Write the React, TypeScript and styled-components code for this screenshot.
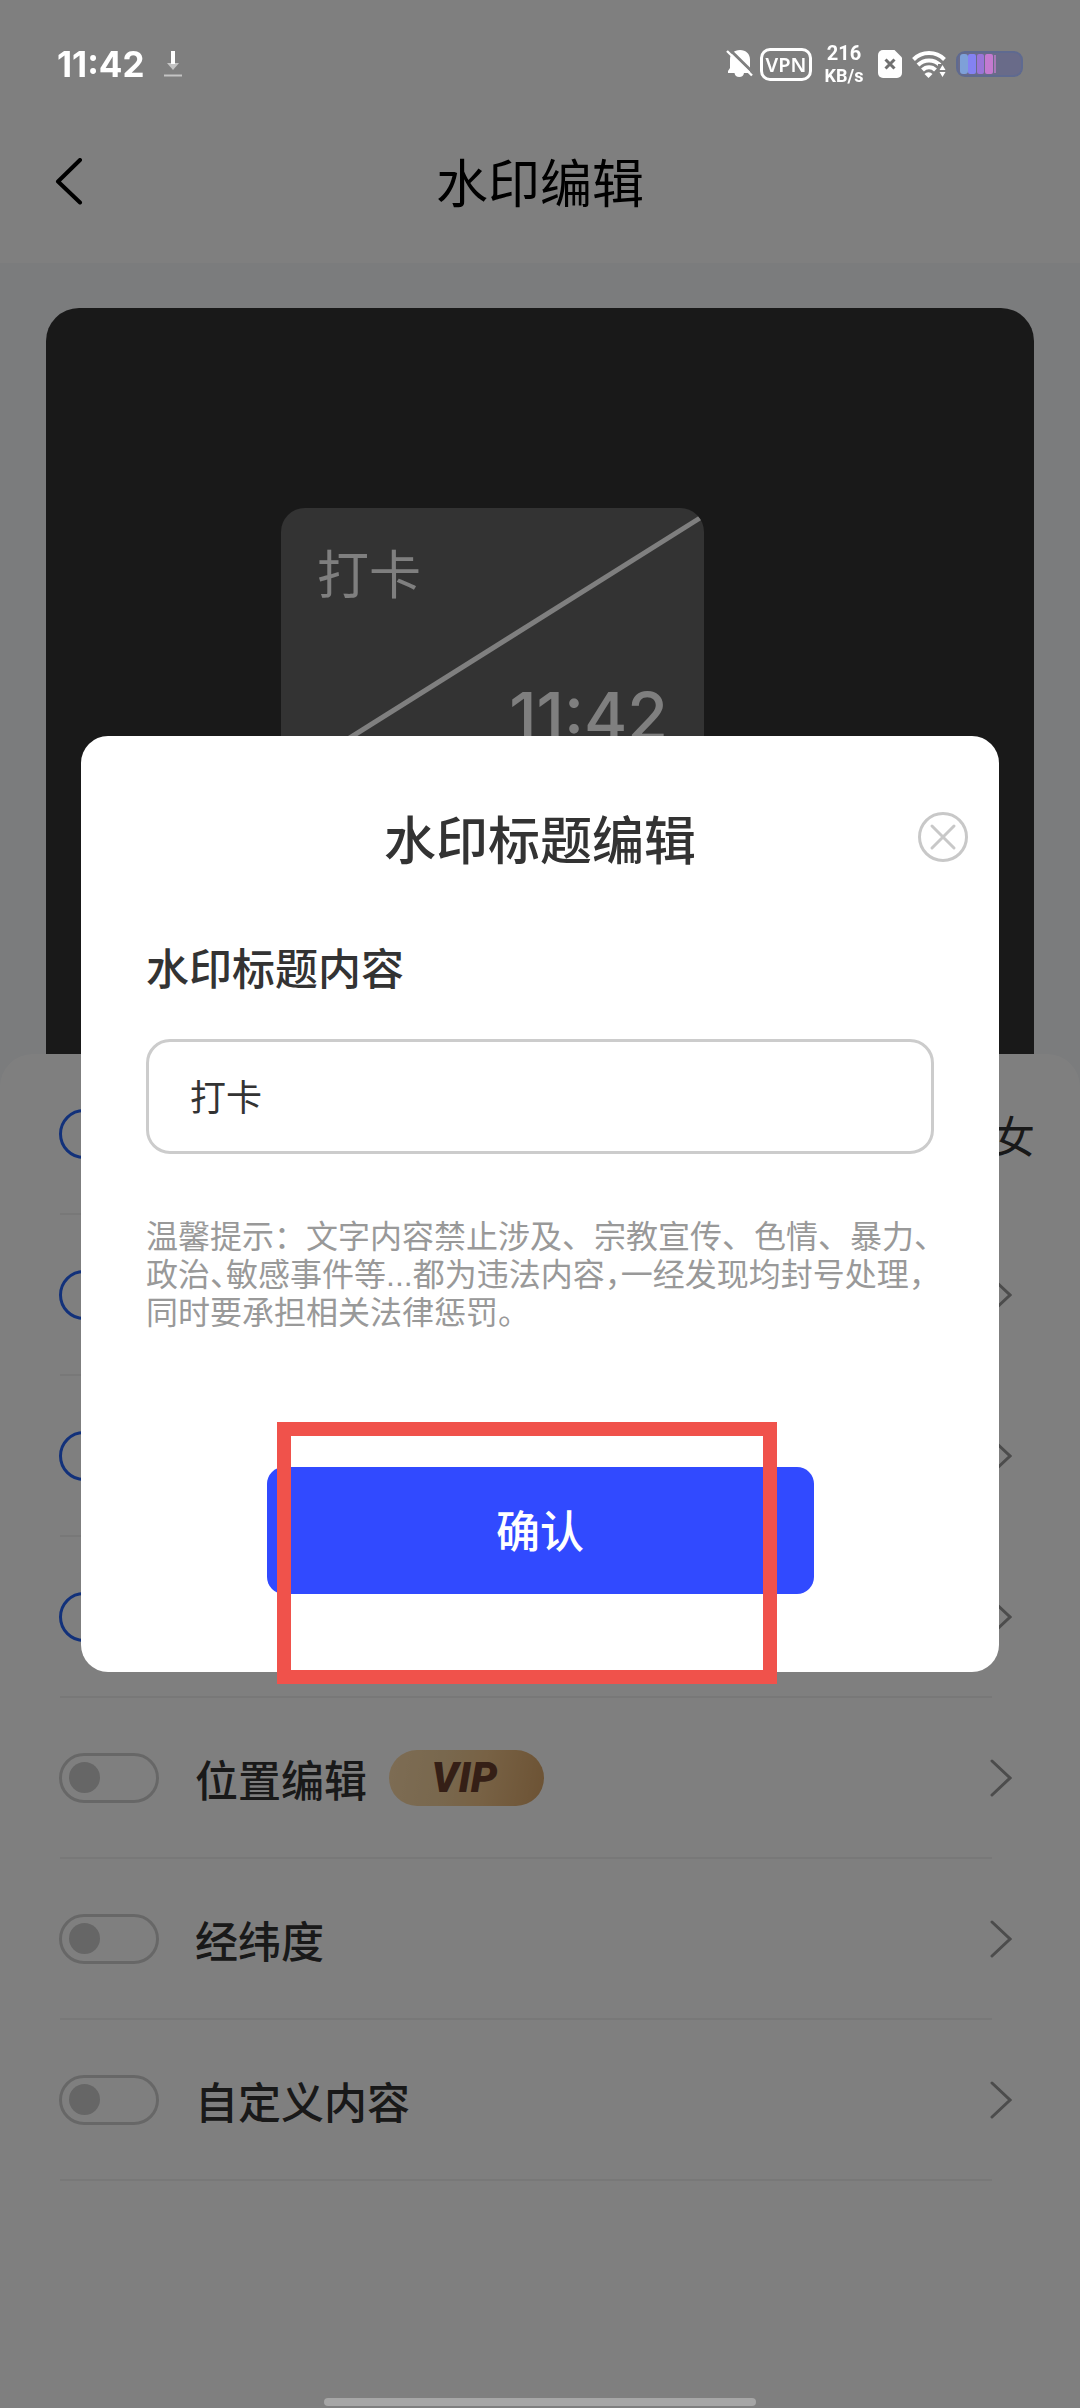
import React from "react";
import styled, { createGlobalStyle } from "styled-components";

const GlobalStyle = createGlobalStyle`
  *, *::before, *::after { box-sizing: border-box; }
  body {
    margin: 0;
    background: #f6f8fb;
    color: #333333;
    font-family: "Noto Sans CJK SC", "Noto Sans", sans-serif;
  }
  button, input { font-family: inherit; color: inherit; }
  svg { display: block; }
`;

const Page = styled.div`
  position: relative;
  min-height: 100vh;
  display: flex;
  flex-direction: column;
  overflow: hidden;
`;

const TopArea = styled.div`
  background: #ffffff;
`;

const StatusBar = styled.div`
  position: relative;
  z-index: 10;
  height: 102px;
  padding: 26px 57px 0;
  display: flex;
  align-items: center;
  justify-content: space-between;
  color: #ffffff;
  font-family: Inter, "Noto Sans", sans-serif;
  font-weight: 700;
`;

const StatusGroup = styled.div<{ $gap: number }>`
  display: flex;
  align-items: center;
  gap: ${(p) => p.$gap}px;
`;

const Clock = styled.span`
  font-size: 35px;
  line-height: 40px;
`;

const VpnTag = styled.span`
  width: 52px;
  height: 33px;
  border: 3px solid #ffffff;
  border-radius: 10px;
  display: flex;
  align-items: center;
  justify-content: center;
  font-family: "Noto Sans", sans-serif;
  font-size: 20px;
  font-weight: 600;
`;

const NetSpeed = styled.span`
  display: flex;
  flex-direction: column;
  align-items: center;
  width: 40px;
  margin: 0 2px;
  font-family: Roboto, sans-serif;
  font-size: 18px;
  line-height: 21px;
`;

const SpeedNumber = styled.span`
  font-size: 20px;
  line-height: 23px;
`;

const Header = styled.header`
  height: 161px;
  padding: 0 54px;
  display: grid;
  grid-template-columns: 60px 1fr 60px;
  align-items: center;
`;

const PageTitle = styled.h1`
  margin: 0;
  padding-bottom: 4px;
  text-align: center;
  font-size: 52px;
  line-height: 60px;
  font-weight: 400;
  color: #000000;
`;

const IconButton = styled.button`
  display: flex;
  padding: 0;
  border: 0;
  background: none;
  cursor: pointer;
`;

const PreviewArea = styled.section`
  padding: 45px 46px 0;
`;

const Preview = styled.div`
  position: relative;
  height: 746px;
  border-radius: 33px 33px 0 0;
  background: #333333;
`;

const Watermark = styled.div`
  position: absolute;
  left: 235px;
  top: 200px;
  width: 423px;
  height: 272px;
  padding: 32px 36px 4px;
  border-radius: 24px;
  overflow: hidden;
  background: #666666;
  color: #ffffff;
  display: flex;
  flex-direction: column;
  justify-content: space-between;
`;

const WatermarkLine = styled.svg`
  position: absolute;
  inset: 0;
`;

const WatermarkName = styled.span`
  font-size: 52px;
  line-height: 64px;
`;

const WatermarkTime = styled.span`
  align-self: flex-end;
  font-family: Inter, sans-serif;
  font-size: 66px;
  line-height: 120px;
  font-weight: 500;
`;

const Sheet = styled.section`
  flex: 1;
  background: #ffffff;
  border-radius: 33px 33px 0 0;
`;

const List = styled.ul`
  margin: 0;
  padding: 0;
  list-style: none;
`;

const Item = styled.li`
  &::after {
    content: "";
    display: block;
    height: 2px;
    margin: 0 88px 0 60px;
    background: #f0f0f0;
  }
`;

const Row = styled.div<{ $wide?: boolean }>`
  height: 159px;
  padding: 0 ${(p) => (p.$wide ? 45 : 68)}px 0 59px;
  display: flex;
  align-items: center;
`;

const RowLabel = styled.label`
  display: flex;
  align-items: center;
  gap: 36px;
  font-size: 43px;
  line-height: 60px;
  font-weight: 500;
`;

const Toggle = styled.input`
  appearance: none;
  width: 100px;
  height: 50px;
  margin: 0;
  padding: 0 7px;
  border: 3px solid #cfcfcf;
  border-radius: 25px;
  display: flex;
  align-items: center;

  &::before {
    content: "";
    width: 31px;
    height: 31px;
    border-radius: 50%;
    background: #cccccc;
  }

  &:checked {
    justify-content: flex-end;
    border-color: #2462f5;
  }

  &:checked::before {
    background: #2462f5;
  }
`;

const Vip = styled.span`
  width: 155px;
  height: 56px;
  margin-left: 22px;
  padding-right: 4px;
  border-radius: 28px;
  display: flex;
  align-items: center;
  justify-content: center;
  background: linear-gradient(100deg, #fbd9a8 0%, #f2d09c 35%, #f0c48a 60%, #d9a568 100%);
  color: #6a3f2c;
  font-family: Roboto, sans-serif;
  font-size: 42px;
  line-height: 56px;
  font-weight: 900;
  font-style: italic;
`;

const RowEnd = styled.span`
  margin-left: auto;
  font-size: 43px;
  line-height: 60px;
`;

const Overlay = styled.div`
  position: fixed;
  inset: 0;
  z-index: 5;
  display: flex;
  align-items: center;
  justify-content: center;
  padding: 0 81px;
  background: rgba(0, 0, 0, 0.5);
`;

const Dialog = styled.form`
  position: relative;
  flex: 1;
  min-width: 0;
  padding: 68px 65px 78px;
  border-radius: 27px;
  background: #ffffff;
  display: flex;
  flex-direction: column;
`;

const DialogTitle = styled.h2`
  margin: 0;
  text-align: center;
  font-size: 52px;
  line-height: 68px;
  font-weight: 500;
`;

const CloseButton = styled(IconButton)`
  position: absolute;
  top: 76px;
  right: 31px;
`;

const FieldLabel = styled.label`
  margin-top: 64px;
  font-size: 43px;
  line-height: 60px;
  font-weight: 500;
`;

const TextField = styled.input`
  width: 100%;
  height: 115px;
  margin-top: 43px;
  padding: 0 41px 4px;
  border: 3px solid #cccccc;
  border-radius: 24px;
  background: #ffffff;
  font-size: 36px;
  outline: none;
`;

const Hint = styled.p`
  margin: 64px 0 0;
  color: #999999;
  font-family: "Liberation Sans", "Noto Sans CJK SC", sans-serif;
  font-size: 32px;
  line-height: 38px;
  white-space: nowrap;
`;

const HintLine = styled.span`
  display: block;
`;

const Tight = styled.span`
  font-feature-settings: "halt";
`;

const ConfirmWrap = styled.div`
  position: relative;
  align-self: center;
  margin-top: 135px;
`;

const Confirm = styled.button`
  width: 547px;
  height: 127px;
  padding-bottom: 4px;
  border: 0;
  border-radius: 17px;
  background: #314aff;
  color: #ffffff;
  font-size: 44px;
  line-height: 60px;
  font-weight: 500;
  cursor: pointer;
`;

const Highlight = styled.div`
  position: absolute;
  left: 10px;
  top: -45px;
  width: 500px;
  height: 262px;
  border: 14px solid #f0524b;
  pointer-events: none;
`;

const HomeBar = styled.div`
  position: fixed;
  z-index: 10;
  left: 30%;
  right: 30%;
  bottom: 2px;
  height: 8px;
  border-radius: 4px;
  background: #a6a6a6;
`;

const Chevron = () => (
  <svg width="22" height="38" viewBox="0 0 22 38" fill="none" stroke="#999" strokeWidth="3" aria-hidden="true">
    <path d="M2 2 20 19 2 36" strokeLinecap="round" />
  </svg>
);

const DownloadIcon = () => (
  <svg width="20" height="28" viewBox="0 0 20 28" aria-hidden="true">
    <path d="M4 13h12l-6 7z" fill="#c4c4c4" />
    <path d="M8 1h4v13H8z" fill="#fff" />
    <path d="M1 24.500h18v2H1z" fill="#c4c4c4" />
  </svg>
);

const MutedIcon = () => (
  <svg width="28" height="30" viewBox="0 0 28 30" aria-hidden="true">
    <path
      d="M14 1c-6 0-10 4-10 9.500V19l-2 3v2h22v-4V10.500C24 5 20 1 14 1z M8.500 24h9.500a4.800 4.800 0 0 1-9.500 0z"
      fill="#fff"
    />
    <path d="M3 0 28 24.500" stroke="#808080" strokeWidth="3" />
    <path d="M1 2 26 26.500" stroke="#fff" strokeWidth="2.400" />
  </svg>
);

const SimIcon = () => (
  <svg width="24" height="28" viewBox="0 0 24 28" aria-hidden="true">
    <path d="M5 0h11.500L24 7.500V23a5 5 0 0 1-5 5H5a5 5 0 0 1-5-5V5a5 5 0 0 1 5-5z" fill="#fff" />
    <path d="m7.500 9.500 9 9m0-9-9 9" stroke="#707070" strokeWidth="3" />
  </svg>
);

const WifiIcon = () => (
  <svg width="34" height="28" viewBox="0 0 34 28" fill="none" aria-hidden="true">
    <g stroke="#fff" strokeWidth="4">
      <path d="M1.500 9.500a22 22 0 0 1 31 0" />
      <path d="M6 15a15.500 15.500 0 0 1 22 0" />
      <path d="M10.500 20a9 9 0 0 1 13 0" />
    </g>
    <path d="M12.500 24a5.500 5.500 0 0 1 8 0L16.500 28z" fill="#fff" />
    <path d="M26 14h8v14h-8z" fill="#808080" />
    <path d="m30.500 15 3 5h-6zM30.500 27l3-5h-6z" fill="#fff" />
  </svg>
);

const BatteryIcon = () => (
  <svg width="67" height="26" viewBox="0 0 67 26" aria-hidden="true">
    <rect x="1" y="1" width="65" height="24" rx="8" fill="#696b89" stroke="#5f6a90" strokeWidth="2" />
    <rect x="4" y="3" width="8" height="20" rx="3" fill="#7ea0d8" />
    <rect x="12" y="3" width="8" height="20" rx="2" fill="#8482f2" />
    <rect x="21" y="3" width="7" height="20" rx="2" fill="#9a75d8" />
    <rect x="29" y="3" width="8" height="20" rx="2" fill="#c47ad0" />
    <rect x="38" y="4" width="2" height="18" fill="#a878b8" />
  </svg>
);

type Option = { id: string; name?: string; on?: boolean; vip?: boolean; value?: string };

const options: Option[] = [
  { id: "gender", on: true, value: "女" },
  { id: "title", on: true },
  { id: "time", on: true },
  { id: "date", on: true },
  { id: "place", name: "位置编辑", vip: true },
  { id: "coords", name: "经纬度" },
  { id: "custom", name: "自定义内容" },
];

export default function App() {
  return (
    <Page>
      <GlobalStyle />
      <TopArea>
        <StatusBar>
          <StatusGroup $gap={18}>
            <Clock>11:42</Clock>
            <DownloadIcon />
          </StatusGroup>
          <StatusGroup $gap={10}>
            <StatusGroup $gap={6}>
              <MutedIcon />
              <VpnTag>VPN</VpnTag>
            </StatusGroup>
            <StatusGroup $gap={12}>
              <NetSpeed>
                <SpeedNumber>216</SpeedNumber>
                <span>KB/s</span>
              </NetSpeed>
              <SimIcon />
            </StatusGroup>
            <WifiIcon />
            <BatteryIcon />
          </StatusGroup>
        </StatusBar>
        <Header>
          <IconButton type="button" aria-label="返回">
            <svg width="30" height="50" viewBox="0 0 30 50" fill="none" stroke="#000" strokeWidth="4">
              <path d="M26 2 4 23.500l22 21" strokeLinecap="round" strokeLinejoin="round" />
            </svg>
          </IconButton>
          <PageTitle>水印编辑</PageTitle>
        </Header>
      </TopArea>

      <PreviewArea>
        <Preview>
          <Watermark>
            <WatermarkLine width="423" height="272" viewBox="0 0 423 272" aria-hidden="true">
              <path d="M419 10 8 268" stroke="#fff" strokeWidth="5" />
            </WatermarkLine>
            <WatermarkName>打卡</WatermarkName>
            <WatermarkTime>11:42</WatermarkTime>
          </Watermark>
        </Preview>
      </PreviewArea>

      <Sheet>
        <List>
          {options.map((o) => (
            <Item key={o.id}>
              <Row $wide={!!o.value}>
                <RowLabel>
                  <Toggle type="checkbox" defaultChecked={o.on} aria-label={o.name ?? o.id} />
                  {o.name}
                </RowLabel>
                {o.vip && <Vip>VIP</Vip>}
                <RowEnd>{o.value ?? <Chevron />}</RowEnd>
              </Row>
            </Item>
          ))}
        </List>
      </Sheet>

      <Overlay>
        <Dialog role="dialog" aria-labelledby="dialog-title" onSubmit={(e) => e.preventDefault()}>
          <DialogTitle id="dialog-title">水印标题编辑</DialogTitle>
          <CloseButton type="button" aria-label="关闭">
            <svg width="50" height="50" viewBox="0 0 50 50" fill="none" stroke="#c8c8c8" strokeWidth="3">
              <circle cx="25" cy="25" r="23.500" />
              <path d="m14 14 22 22m0-22L14 36" strokeLinecap="round" />
            </svg>
          </CloseButton>
          <FieldLabel htmlFor="watermark-title">水印标题内容</FieldLabel>
          <TextField id="watermark-title" type="text" defaultValue="打卡" />
          <Hint>
            <HintLine>温馨提示：文字内容禁止涉及、宗教宣传、色情、暴力、</HintLine>
            <HintLine>
              政治<Tight>、</Tight>敏感事件等...都为违法内容<Tight>，</Tight>一经发现均封号处理，
            </HintLine>
            <HintLine>同时要承担相关法律惩罚。</HintLine>
          </Hint>
          <ConfirmWrap>
            <Confirm type="submit">确认</Confirm>
            <Highlight />
          </ConfirmWrap>
        </Dialog>
      </Overlay>
      <HomeBar />
    </Page>
  );
}
